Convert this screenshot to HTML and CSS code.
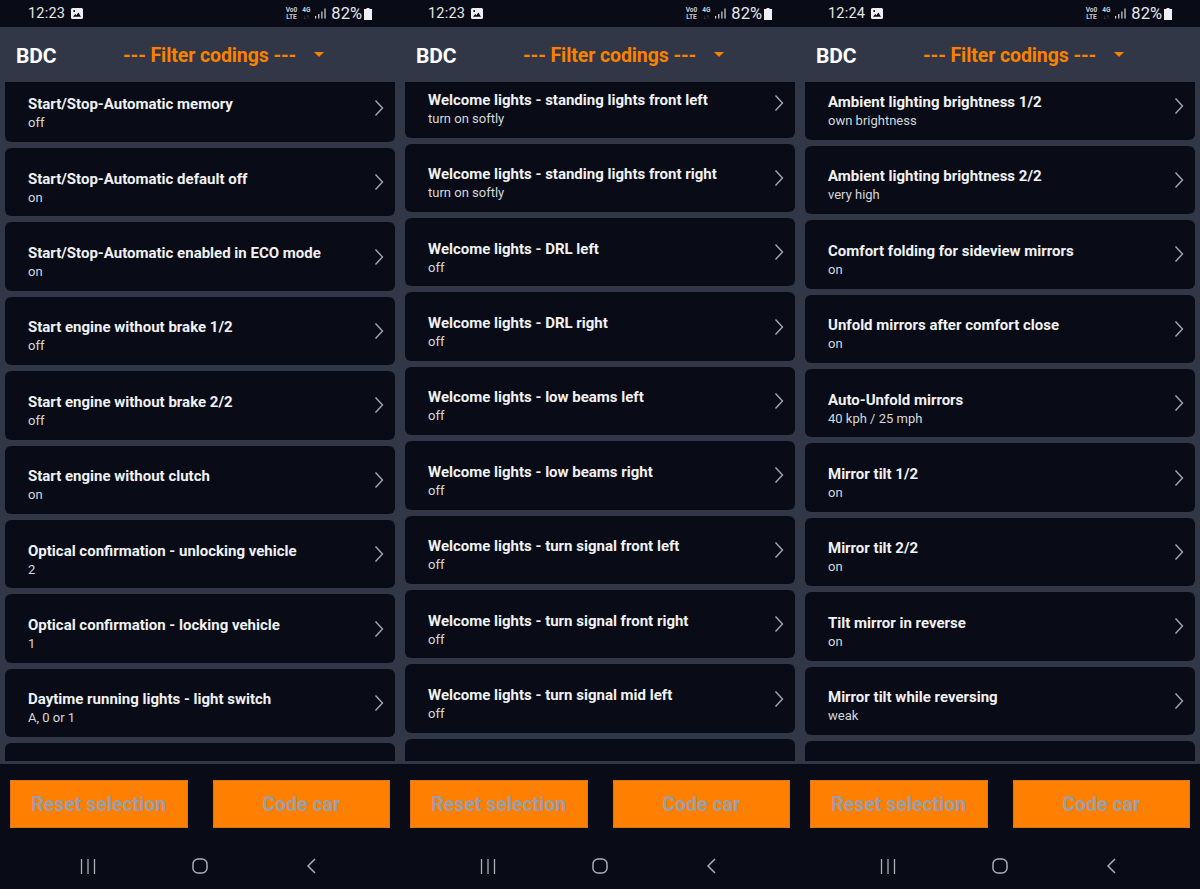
FILE: index.html
```html
<!DOCTYPE html>
<html lang="en">
<head>
<meta charset="utf-8">
<title>BDC codings</title>
<link rel="stylesheet" href="styles.css">
</head>
<body>
<svg class="defs" width="0" height="0" aria-hidden="true">
  <symbol id="chev" viewBox="0 0 10 18"><path d="M1.500 1.500 8.500 9 1.500 16.500" fill="none" stroke="currentColor" stroke-width="1.400"/></symbol>
  <symbol id="pic" viewBox="0 0 12 11"><path fill-rule="evenodd" d="M1.500 0h9A1.500 1.500 0 0 1 12 1.500v8a1.500 1.500 0 0 1-1.500 1.500h-9A1.500 1.500 0 0 1 0 9.500v-8A1.500 1.500 0 0 1 1.500 0ZM2 8.800h8L7.400 4.600 5.400 7.300 4.200 6Z M3.200 2a1 1 0 1 0 0 2 1 1 0 0 0 0-2Z" fill="currentColor"/></symbol>
  <symbol id="signal" viewBox="0 0 13 12"><path d="M0 9h1.500v3H0zM3.700 6.500h1.500V12H3.700zM7.400 3.500h1.500V12H7.400zM11.100 0h1.500v12h-1.500z" fill="currentColor"/></symbol>
  <symbol id="batt" viewBox="0 0 8 12"><path d="M2.500 0h3v1H8v11H0V1h2.500z" fill="currentColor"/></symbol>
  <symbol id="caret" viewBox="0 0 10 5"><path d="M0 0h10L5 5z" fill="currentColor"/></symbol>
  <symbol id="recents" viewBox="0 0 16 15"><path d="M1.500 0v15M8 0v15M14.500 0v15" stroke="currentColor" stroke-width="1.300" fill="none"/></symbol>
  <symbol id="home" viewBox="0 0 16 16"><rect x="1" y="1" width="14" height="14" rx="5" stroke="currentColor" stroke-width="1.500" fill="none"/></symbol>
  <symbol id="back" viewBox="0 0 10 16"><path d="M9 1 2 8l7 7" stroke="currentColor" stroke-width="1.500" fill="none"/></symbol>
</svg>
<main class="phones">

<section class="phone p1">
  <div class="status"><span class="time">12:23</span><svg class="pic"><use href="#pic"/></svg><span class="spacer"></span><span class="net"><span>Vo0</span><span>LTE</span></span><span class="net g4"><span>4G</span><span class="dim">↓↑</span></span><svg class="signal"><use href="#signal"/></svg><span class="pct">82%</span><svg class="batt"><use href="#batt"/></svg></div>
  <header class="bar"><h1>BDC</h1><div class="filter">--- Filter codings ---</div><svg class="caret"><use href="#caret"/></svg></header>
  <div class="viewport"><ul class="list">
    <li class="card"><div class="txt"><b>Start/Stop-Automatic memory</b><span>off</span></div><svg class="chev"><use href="#chev"/></svg></li>
    <li class="card"><div class="txt"><b>Start/Stop-Automatic default off</b><span>on</span></div><svg class="chev"><use href="#chev"/></svg></li>
    <li class="card"><div class="txt"><b>Start/Stop-Automatic enabled in ECO mode</b><span>on</span></div><svg class="chev"><use href="#chev"/></svg></li>
    <li class="card"><div class="txt"><b>Start engine without brake 1/2</b><span>off</span></div><svg class="chev"><use href="#chev"/></svg></li>
    <li class="card"><div class="txt"><b>Start engine without brake 2/2</b><span>off</span></div><svg class="chev"><use href="#chev"/></svg></li>
    <li class="card"><div class="txt"><b>Start engine without clutch</b><span>on</span></div><svg class="chev"><use href="#chev"/></svg></li>
    <li class="card"><div class="txt"><b>Optical confirmation - unlocking vehicle</b><span>2</span></div><svg class="chev"><use href="#chev"/></svg></li>
    <li class="card"><div class="txt"><b>Optical confirmation - locking vehicle</b><span>1</span></div><svg class="chev"><use href="#chev"/></svg></li>
    <li class="card"><div class="txt"><b>Daytime running lights - light switch</b><span>A, 0 or 1</span></div><svg class="chev"><use href="#chev"/></svg></li>
    <li class="card"></li>
  </ul></div>
  <div class="actions"><div class="btn">Reset selection</div><div class="btn">Code car</div></div>
  <nav class="nav"><svg class="recents"><use href="#recents"/></svg><svg class="home"><use href="#home"/></svg><svg class="back"><use href="#back"/></svg></nav>
</section>

<section class="phone p2">
  <div class="status"><span class="time">12:23</span><svg class="pic"><use href="#pic"/></svg><span class="spacer"></span><span class="net"><span>Vo0</span><span>LTE</span></span><span class="net g4"><span>4G</span><span class="dim">↓↑</span></span><svg class="signal"><use href="#signal"/></svg><span class="pct">82%</span><svg class="batt"><use href="#batt"/></svg></div>
  <header class="bar"><h1>BDC</h1><div class="filter">--- Filter codings ---</div><svg class="caret"><use href="#caret"/></svg></header>
  <div class="viewport"><ul class="list">
    <li class="card"><div class="txt"><b>Welcome lights - standing lights front left</b><span>turn on softly</span></div><svg class="chev"><use href="#chev"/></svg></li>
    <li class="card"><div class="txt"><b>Welcome lights - standing lights front right</b><span>turn on softly</span></div><svg class="chev"><use href="#chev"/></svg></li>
    <li class="card"><div class="txt"><b>Welcome lights - DRL left</b><span>off</span></div><svg class="chev"><use href="#chev"/></svg></li>
    <li class="card"><div class="txt"><b>Welcome lights - DRL right</b><span>off</span></div><svg class="chev"><use href="#chev"/></svg></li>
    <li class="card"><div class="txt"><b>Welcome lights - low beams left</b><span>off</span></div><svg class="chev"><use href="#chev"/></svg></li>
    <li class="card"><div class="txt"><b>Welcome lights - low beams right</b><span>off</span></div><svg class="chev"><use href="#chev"/></svg></li>
    <li class="card"><div class="txt"><b>Welcome lights - turn signal front left</b><span>off</span></div><svg class="chev"><use href="#chev"/></svg></li>
    <li class="card"><div class="txt"><b>Welcome lights - turn signal front right</b><span>off</span></div><svg class="chev"><use href="#chev"/></svg></li>
    <li class="card"><div class="txt"><b>Welcome lights - turn signal mid left</b><span>off</span></div><svg class="chev"><use href="#chev"/></svg></li>
    <li class="card"></li>
  </ul></div>
  <div class="actions"><div class="btn">Reset selection</div><div class="btn">Code car</div></div>
  <nav class="nav"><svg class="recents"><use href="#recents"/></svg><svg class="home"><use href="#home"/></svg><svg class="back"><use href="#back"/></svg></nav>
</section>

<section class="phone p3">
  <div class="status"><span class="time">12:24</span><svg class="pic"><use href="#pic"/></svg><span class="spacer"></span><span class="net"><span>Vo0</span><span>LTE</span></span><span class="net g4"><span>4G</span><span class="dim">↓↑</span></span><svg class="signal"><use href="#signal"/></svg><span class="pct">82%</span><svg class="batt"><use href="#batt"/></svg></div>
  <header class="bar"><h1>BDC</h1><div class="filter">--- Filter codings ---</div><svg class="caret"><use href="#caret"/></svg></header>
  <div class="viewport"><ul class="list">
    <li class="card"><div class="txt"><b>Ambient lighting brightness 1/2</b><span>own brightness</span></div><svg class="chev"><use href="#chev"/></svg></li>
    <li class="card"><div class="txt"><b>Ambient lighting brightness 2/2</b><span>very high</span></div><svg class="chev"><use href="#chev"/></svg></li>
    <li class="card"><div class="txt"><b>Comfort folding for sideview mirrors</b><span>on</span></div><svg class="chev"><use href="#chev"/></svg></li>
    <li class="card"><div class="txt"><b>Unfold mirrors after comfort close</b><span>on</span></div><svg class="chev"><use href="#chev"/></svg></li>
    <li class="card"><div class="txt"><b>Auto-Unfold mirrors</b><span>40 kph / 25 mph</span></div><svg class="chev"><use href="#chev"/></svg></li>
    <li class="card"><div class="txt"><b>Mirror tilt 1/2</b><span>on</span></div><svg class="chev"><use href="#chev"/></svg></li>
    <li class="card"><div class="txt"><b>Mirror tilt 2/2</b><span>on</span></div><svg class="chev"><use href="#chev"/></svg></li>
    <li class="card"><div class="txt"><b>Tilt mirror in reverse</b><span>on</span></div><svg class="chev"><use href="#chev"/></svg></li>
    <li class="card"><div class="txt"><b>Mirror tilt while reversing</b><span>weak</span></div><svg class="chev"><use href="#chev"/></svg></li>
    <li class="card"></li>
  </ul></div>
  <div class="actions"><div class="btn">Reset selection</div><div class="btn">Code car</div></div>
  <nav class="nav"><svg class="recents"><use href="#recents"/></svg><svg class="home"><use href="#home"/></svg><svg class="back"><use href="#back"/></svg></nav>
</section>

</main>
</body>
</html>
```
FILE: styles.css
```css
* { box-sizing: border-box; }
html, body { margin: 0; padding: 0; height: 889px; overflow: hidden; background: #090c16; }
body { font-family: Roboto, "Liberation Sans", sans-serif; color: #fff; }
.defs { position: absolute; }
.phones { display: flex; height: 889px; }
.phone { width: 400px; height: 889px; display: flex; flex-direction: column; background: #090c16; }

.status { height: 27px; flex: none; display: flex; align-items: center; padding: 6px 28px 6px 28px; color: #e4e6ea; font-size: 14.500px; }
.time { letter-spacing: .2px; }
.pic { width: 12px; height: 11px; margin-left: 6px; color: #eef0f3; }
.spacer { flex: 1; }
.net { display: flex; flex-direction: column; font-size: 6.500px; line-height: 6.500px; font-weight: 700; align-items: center; color: #c9ccd2; }
.g4 { margin-left: 5px; }
.dim { color: #6d7079; }
.signal { width: 11px; height: 11px; margin-left: 5px; color: #c9ccd2; }
.pct { margin-left: 5px; font-size: 16.500px; }
.batt { width: 8px; height: 12px; margin-left: 2px; color: #eef0f3; }

.bar { height: 55px; flex: none; background: #323748; display: flex; align-items: center; padding: 2px 0 0 16px; }
.bar h1 { margin: 0; font-size: 21px; font-weight: 700; width: 107px; letter-spacing: -.1px; }
.filter { color: #f98200; font-size: 19.500px; font-weight: 700; width: 191px; white-space: nowrap; letter-spacing: -.1px; }
.caret { width: 10px; height: 5px; color: #f98200; margin-top: -2px; }

.viewport { height: 682px; flex: none; background: #323748; overflow: hidden; border-bottom: 3px solid #323748; }
.list { list-style: none; margin: 0; padding: 0 5px; display: flex; flex-direction: column; gap: 6px; }
.p1 .list { margin-top: -8.400px; }
.p2 .list { margin-top: -12.800px; }
.p3 .list { margin-top: -10.600px; }
.card { height: 68.400px; flex: none; background: #090c16; border-radius: 6px; display: flex; align-items: center; justify-content: space-between; padding: 0 11px 0 23px; }
.txt { display: flex; flex-direction: column; padding-top: 12px; }
.txt b { font-size: 15px; font-weight: 700; line-height: 18px; color: #f0f1f3; }
.txt span { font-size: 13px; line-height: 18px; margin-top: 1px; color: #d5d7db; }
.chev { width: 10px; height: 18px; color: #a4a8b1; }

.actions { height: 77px; flex: none; display: flex; justify-content: space-between; padding: 16px 10px 0; }
.btn { width: 178px; height: 48px; background: #ff8000; border: 1px solid #d9751a; color: #9a9ea8; font-size: 19.500px; font-weight: 700; display: flex; align-items: center; justify-content: center; }
.btn + .btn { width: 177px; }
.nav { flex: 1; display: flex; align-items: center; color: #a9adb5; padding: 2px 0 0; }
.recents { width: 16px; height: 15px; margin-left: 80px; }
.home { width: 16px; height: 16px; margin-left: 96px; }
.back { width: 10px; height: 16px; margin-left: 98px; }
```
